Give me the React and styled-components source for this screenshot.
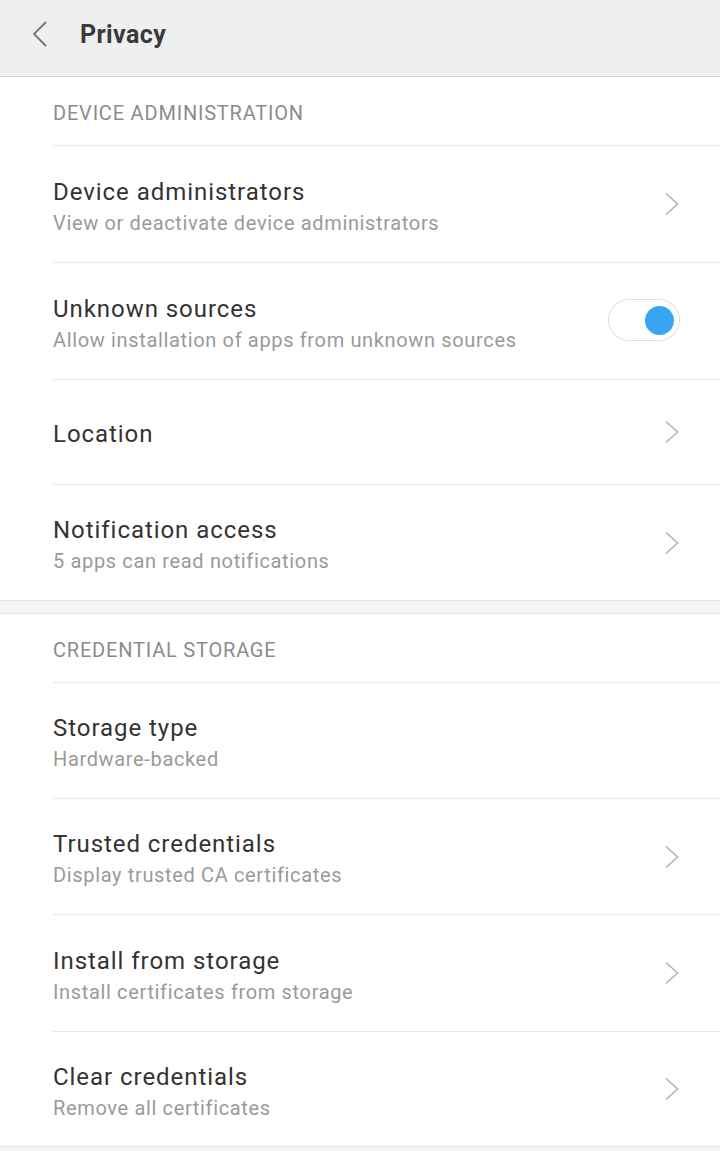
import React from "react";
import styled, { createGlobalStyle } from "styled-components";

const Global = createGlobalStyle`
  html, body { margin: 0; padding: 0; background: #f5f5f5; }
  body { font-family: Roboto, "Noto Sans", sans-serif; -webkit-font-smoothing: antialiased; }
`;

const Page = styled.div`
  width: 720px;
  min-height: 1151px;
  background: #f5f5f5;
`;

const Header = styled.header`
  height: 77px;
  box-sizing: border-box;
  background: #eeefef;
  border-bottom: 1px solid #d6d6d6;
  display: flex;
  align-items: center;
  padding-left: 30px;
  gap: 30px;
`;

const BackButton = styled.div`
  width: 20px;
  height: 28px;
  display: flex;
  align-items: center;
  justify-content: center;
  margin-top: -8px;
`;

const Title = styled.h1`
  margin: 0;
  margin-top: -8px;
  font-size: 25px;
  font-weight: 700;
  letter-spacing: 0.4px;
  color: #3a3a3a;
`;

const Section = styled.section`
  background: #fff;
  border-bottom: 1px solid #e4e4e4;
  border-top: ${(p) => (p.$top ? "1px solid #e4e4e4" : "none")};
  margin-bottom: ${(p) => p.$gap || 0}px;
`;

const SectionHeader = styled.div`
  height: 68px;
  box-sizing: border-box;
  padding-left: 53px;
  padding-top: 3px;
  display: flex;
  align-items: center;
  font-size: 20px;
  color: #8c8c8c;
  letter-spacing: 0.8px;
`;

const Row = styled.div`
  margin-left: 53px;
  border-top: 1px solid #e8e8e8;
  height: ${(p) => p.$h || 117}px;
  box-sizing: border-box;
  display: flex;
  align-items: center;
  padding-right: 40px;
`;

const Texts = styled.div`
  flex: 1;
  display: flex;
  flex-direction: column;
  gap: 5px;
  padding-top: 4px;
`;

const RowTitle = styled.div`
  font-size: 24px;
  letter-spacing: 0.95px;
  color: #333;
  line-height: 28px;
`;

const RowSub = styled.div`
  font-size: 20px;
  letter-spacing: 0.65px;
  color: #9a9a9a;
  line-height: 24px;
`;

const Chevron = styled.div`
  width: 16px;
  height: 24px;
  display: flex;
`;

const Toggle = styled.div`
  width: 72px;
  height: 42px;
  box-sizing: border-box;
  border: 1px solid #dedede;
  border-radius: 21px;
  background: #fff;
  display: flex;
  align-items: center;
  justify-content: flex-end;
  padding-right: 5px;
  margin-top: -2px;
`;

const Knob = styled.div`
  width: 29px;
  height: 29px;
  border-radius: 50%;
  background: #37a5f1;
`;

const ChevronIcon = () => (
  <Chevron>
    <svg width="16" height="24" viewBox="0 0 16 24">
      <path d="M2 1.5 L13.5 12 L2 22.5" fill="none" stroke="#b4b4b4" strokeWidth="1.6" />
    </svg>
  </Chevron>
);

const Item = ({ title, sub, chevron, toggle, h }) => (
  <Row $h={h}>
    <Texts>
      <RowTitle>{title}</RowTitle>
      {sub && <RowSub>{sub}</RowSub>}
    </Texts>
    {chevron && <ChevronIcon />}
    {toggle && (
      <Toggle>
        <Knob />
      </Toggle>
    )}
  </Row>
);

export default function App() {
  return (
    <Page>
      <Global />
      <Header>
        <BackButton>
          <svg width="20" height="28" viewBox="0 0 20 28">
            <path d="M16 2 L4 14 L16 26" fill="none" stroke="#757575" strokeWidth="1.8" />
          </svg>
        </BackButton>
        <Title>Privacy</Title>
      </Header>
      <Section $gap={12}>
        <SectionHeader>DEVICE ADMINISTRATION</SectionHeader>
        <Item title="Device administrators" sub="View or deactivate device administrators" chevron />
        <Item title="Unknown sources" sub="Allow installation of apps from unknown sources" toggle />
        <Item title="Location" chevron h={105} />
        <Item title="Notification access" sub="5 apps can read notifications" chevron h={116} />
      </Section>
      <Section $top>
        <SectionHeader>CREDENTIAL STORAGE</SectionHeader>
        <Item title="Storage type" sub="Hardware-backed" h={116} />
        <Item title="Trusted credentials" sub="Display trusted CA certificates" chevron h={116} />
        <Item title="Install from storage" sub="Install certificates from storage" chevron />
        <Item title="Clear credentials" sub="Remove all certificates" chevron h={115} />
      </Section>
    </Page>
  );
}
